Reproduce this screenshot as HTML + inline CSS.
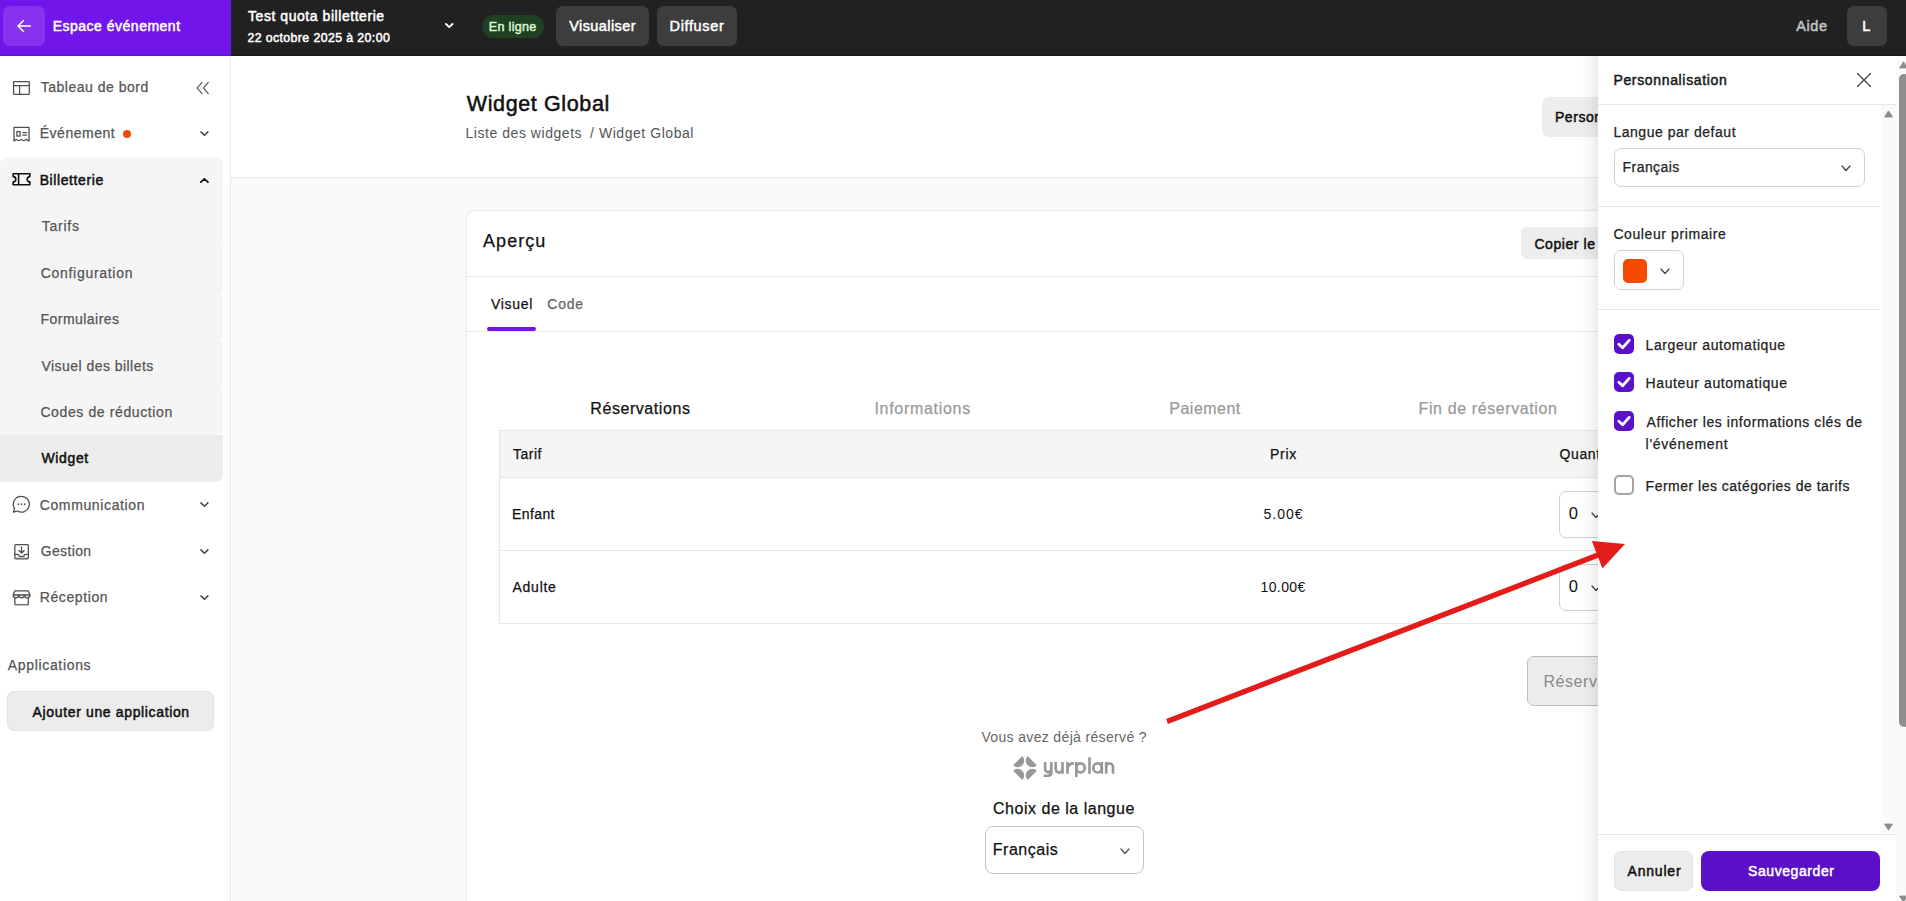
<!DOCTYPE html>
<html><head><meta charset="utf-8"><title>Widget Global</title>
<style>
*{box-sizing:border-box;margin:0;padding:0}
html,body{width:1906px;height:901px;overflow:hidden;background:#fafafa;font-family:"Liberation Sans",sans-serif}
.a{position:absolute}
.t{position:absolute;line-height:1;white-space:nowrap}
</style></head><body>
<div class="a" style="left:0px;top:0px;width:1906px;height:56px;background:#212121;border-radius:0px;"></div>
<div class="a" style="left:0px;top:54.6px;width:1906px;height:1.3999999999999986px;background:#191919;border-radius:0px;"></div>
<div class="a" style="left:0px;top:0px;width:231px;height:56px;background:#7115ea;border-radius:0px;"></div>
<div class="a" style="left:0px;top:54.6px;width:231px;height:1.3999999999999986px;background:#6410d6;border-radius:0px;"></div>
<div class="a" style="left:3px;top:6px;width:42px;height:40px;background:#8733ee;border-radius:7px;"></div>
<svg class="a" style="left:3px;top:6px" width="42" height="40" viewBox="0 0 42 40"><path d="M27.3 20H15.5M20.3 14.8L15 20L20.3 25.2" stroke="#fff" stroke-width="1.55" fill="none" stroke-linecap="round" stroke-linejoin="round"/></svg>
<div class="t" style="left:52.70px;top:18.95px;font-size:14px;letter-spacing:0.500px;color:#ffffff;-webkit-text-stroke:0.5px #ffffff;">Espace événement</div>
<div class="t" style="left:248.00px;top:8.95px;font-size:14px;letter-spacing:0.552px;color:#ffffff;-webkit-text-stroke:0.5px #ffffff;">Test quota billetterie</div>
<div class="t" style="left:247.40px;top:32.19px;font-size:12.3px;letter-spacing:0.409px;color:#ffffff;-webkit-text-stroke:0.5px #ffffff;">22 octobre 2025 à 20:00</div>
<svg class="a" style="left:444.5px;top:23.3px" width="9" height="6" viewBox="0 0 9 6"><path d="M1 1L4.25 4.1L7.5 1" stroke="#fff" stroke-width="1.9" fill="none" stroke-linecap="round" stroke-linejoin="round"/></svg>
<div class="a" style="left:482px;top:14.7px;width:62px;height:23.3px;background:#1f4023;border-radius:12px;"></div>
<div class="t" style="left:488.80px;top:20.52px;font-size:12.5px;letter-spacing:0.329px;color:#d6f3cc;-webkit-text-stroke:0.5px #d6f3cc;">En ligne</div>
<div class="a" style="left:556px;top:6px;width:93px;height:40px;background:#3d3d3d;border-radius:7px;"></div>
<div class="t" style="left:569.20px;top:18.83px;font-size:14.5px;letter-spacing:0.422px;color:#ffffff;-webkit-text-stroke:0.5px #ffffff;">Visualiser</div>
<div class="a" style="left:657px;top:6px;width:80px;height:40px;background:#3d3d3d;border-radius:7px;"></div>
<div class="t" style="left:669.50px;top:18.83px;font-size:14.5px;letter-spacing:0.657px;color:#ffffff;-webkit-text-stroke:0.5px #ffffff;">Diffuser</div>
<div class="t" style="left:1796.20px;top:18.83px;font-size:14.5px;letter-spacing:0.633px;color:#c4c4c4;-webkit-text-stroke:0.5px #c4c4c4;">Aide</div>
<div class="a" style="left:1847px;top:6px;width:40px;height:40px;background:#3d3d3d;border-radius:7px;"></div>
<div class="t" style="left:1862.30px;top:18.73px;font-size:14.5px;letter-spacing:0.575px;color:#ffffff;-webkit-text-stroke:0.5px #ffffff;">L</div>
<div class="a" style="left:0px;top:56px;width:231px;height:845px;background:#ffffff;border-radius:0px;"></div>
<div class="a" style="left:230px;top:56px;width:1px;height:845px;background:#ebebeb;border-radius:0px;"></div>
<div class="a" style="left:0;top:157px;width:223px;height:92px;background:#f5f5f5;border-radius:8px 8px 6px 0"></div>
<div class="a" style="left:0;top:249px;width:223px;height:46px;background:#f5f5f5;border-radius:0 0 6px 0"></div>
<div class="a" style="left:0;top:295px;width:223px;height:46px;background:#f5f5f5;border-radius:0 0 6px 0"></div>
<div class="a" style="left:0;top:341px;width:223px;height:47px;background:#f5f5f5;border-radius:0 0 6px 0"></div>
<div class="a" style="left:0;top:388px;width:223px;height:47px;background:#f5f5f5;border-radius:0 0 6px 0"></div>
<div class="a" style="left:0;top:435px;width:223px;height:47px;background:#ececec;border-radius:0 0 8px 0"></div>
<svg class="a" style="left:12px;top:80px" width="20" height="16" viewBox="0 0 20 16"><rect x="1.6" y="1.6" width="15.7" height="12.8" rx="0.6" stroke="#505050" stroke-width="1.3" fill="none"/><path d="M1.6 5.6H17.3M7.6 5.6V14.4" stroke="#505050" stroke-width="1.3" fill="none"/></svg>
<div class="t" style="left:40.70px;top:80.25px;font-size:14px;letter-spacing:0.507px;color:#555555;-webkit-text-stroke:0.25px #555555;">Tableau de bord</div>
<svg class="a" style="left:195px;top:81px" width="16" height="14" viewBox="0 0 16 14"><path d="M7 1.5L2.2 7L7 12.5M13.2 1.5L8.4 7L13.2 12.5" stroke="#6a6a6a" stroke-width="1.3" fill="none" stroke-linecap="round" stroke-linejoin="round"/></svg>
<svg class="a" style="left:8px;top:120px" width="28" height="30" viewBox="0 0 28 30"><path d="M6 21V7.4H21.05V21L18.4 19.4Q15.9 21.9 13.4 19.4Q10.9 21.9 8.4 19.4Z" stroke="#505050" stroke-width="1.3" fill="none" stroke-linejoin="round"/><rect x="8.9" y="11.6" width="3.2" height="4.5" stroke="#505050" stroke-width="1.25" fill="none"/><path d="M14.4 12.5H19.1M14.4 15.2H19.1" stroke="#505050" stroke-width="1.25"/></svg>
<div class="t" style="left:39.70px;top:125.95px;font-size:14px;letter-spacing:0.525px;color:#555555;-webkit-text-stroke:0.25px #555555;">Événement</div>
<div class="a" style="left:122.8px;top:129.8px;width:8.4px;height:8.4px;border-radius:50%;background:#f54a0a"></div>
<svg class="a" style="left:199.6px;top:130.6px" width="9" height="6" viewBox="0 0 9 6"><path d="M0.9 0.9L4.4 4.2L7.9 0.9" stroke="#444" stroke-width="1.5" fill="none" stroke-linecap="round" stroke-linejoin="round"/></svg>
<svg class="a" style="left:11px;top:171px" width="22" height="17" viewBox="0 0 22 17"><path d="M2.15 2.75H18.85V5.6A2.65 2.65 0 0 0 18.85 10.9V13.75H2.15V10.9A2.65 2.65 0 0 0 2.15 5.6Z" stroke="#111" stroke-width="1.6" fill="none" stroke-linejoin="round"/><path d="M7.6 2.75V13.75" stroke="#111" stroke-width="1.6"/></svg>
<div class="t" style="left:39.70px;top:172.95px;font-size:14px;letter-spacing:0.590px;color:#111111;-webkit-text-stroke:0.5px #111111;">Billetterie</div>
<svg class="a" style="left:199.6px;top:177.7px" width="9" height="6" viewBox="0 0 9 6"><path d="M0.9 4.2L4.4 0.9L7.9 4.2" stroke="#111" stroke-width="1.8" fill="none" stroke-linecap="round" stroke-linejoin="round"/></svg>
<div class="t" style="left:41.70px;top:219.05px;font-size:14px;letter-spacing:0.760px;color:#555555;-webkit-text-stroke:0.25px #555555;">Tarifs</div>
<div class="t" style="left:40.70px;top:266.05px;font-size:14px;letter-spacing:0.708px;color:#555555;-webkit-text-stroke:0.25px #555555;">Configuration</div>
<div class="t" style="left:40.50px;top:312.35px;font-size:14px;letter-spacing:0.460px;color:#555555;-webkit-text-stroke:0.25px #555555;">Formulaires</div>
<div class="t" style="left:41.50px;top:358.65px;font-size:14px;letter-spacing:0.453px;color:#555555;-webkit-text-stroke:0.25px #555555;">Visuel des billets</div>
<div class="t" style="left:40.40px;top:404.95px;font-size:14px;letter-spacing:0.612px;color:#555555;-webkit-text-stroke:0.25px #555555;">Codes de réduction</div>
<div class="t" style="left:41.40px;top:451.05px;font-size:14px;letter-spacing:0.660px;color:#111111;-webkit-text-stroke:0.5px #111111;">Widget</div>
<svg class="a" style="left:12px;top:495px" width="19" height="19" viewBox="0 0 19 19"><path d="M9.6 1.3A7.9 7.9 0 1 1 5.4 16L1.4 17.2L2.6 13.5A7.9 7.9 0 0 1 9.6 1.3Z" stroke="#505050" stroke-width="1.3" fill="none" stroke-linejoin="round"/><circle cx="6.4" cy="9.2" r="0.85" fill="#505050"/><circle cx="9.6" cy="9.2" r="0.85" fill="#505050"/><circle cx="12.8" cy="9.2" r="0.85" fill="#505050"/></svg>
<div class="t" style="left:39.70px;top:498.25px;font-size:14px;letter-spacing:0.633px;color:#555555;-webkit-text-stroke:0.25px #555555;">Communication</div>
<svg class="a" style="left:199.6px;top:501.5px" width="9" height="6" viewBox="0 0 9 6"><path d="M0.9 0.9L4.4 4.2L7.9 0.9" stroke="#444" stroke-width="1.5" fill="none" stroke-linecap="round" stroke-linejoin="round"/></svg>
<svg class="a" style="left:8px;top:538px" width="28" height="72" viewBox="0 0 28 72"><rect x="6.85" y="6.65" width="13.5" height="14.1" rx="1" stroke="#505050" stroke-width="1.3" fill="none"/><path d="M6.85 19.6H20.35V20.9H6.85Z" fill="#7a7a7a"/><path d="M6.85 16.4H9.6Q10.5 16.4 11 17.4L11.4 18.3H15.8L16.2 17.4Q16.7 16.4 17.6 16.4H20.35M13.5 8.9V15.1M10.9 12.5L13.5 15.1L16.1 12.5" stroke="#505050" stroke-width="1.3" fill="none" stroke-linecap="round" stroke-linejoin="round"/></svg>
<div class="t" style="left:40.70px;top:543.65px;font-size:14px;letter-spacing:0.367px;color:#555555;-webkit-text-stroke:0.25px #555555;">Gestion</div>
<svg class="a" style="left:199.6px;top:548.5px" width="9" height="6" viewBox="0 0 9 6"><path d="M0.9 0.9L4.4 4.2L7.9 0.9" stroke="#444" stroke-width="1.5" fill="none" stroke-linecap="round" stroke-linejoin="round"/></svg>
<svg class="a" style="left:8px;top:538px" width="28" height="72" viewBox="0 0 28 72"><path d="M6.9 52.8H20.3L22 57H5.2Z" stroke="#505050" stroke-width="1.3" fill="none" stroke-linejoin="round"/><path d="M5.2 57A2.8 2.8 0 0 0 10.8 57A2.8 2.8 0 0 0 16.4 57A2.8 2.8 0 0 0 22 57M6.9 59V66.6H20.3V59" stroke="#505050" stroke-width="1.3" fill="none" stroke-linejoin="round"/><path d="M6.9 65.9H20.3V67.3H6.9Z" fill="#7a7a7a"/></svg>
<div class="t" style="left:39.70px;top:589.85px;font-size:14px;letter-spacing:0.612px;color:#555555;-webkit-text-stroke:0.25px #555555;">Réception</div>
<svg class="a" style="left:199.6px;top:594.5px" width="9" height="6" viewBox="0 0 9 6"><path d="M0.9 0.9L4.4 4.2L7.9 0.9" stroke="#444" stroke-width="1.5" fill="none" stroke-linecap="round" stroke-linejoin="round"/></svg>
<div class="t" style="left:7.80px;top:657.75px;font-size:14px;letter-spacing:0.664px;color:#555555;-webkit-text-stroke:0.25px #555555;">Applications</div>
<div class="a" style="left:7px;top:691px;width:207px;height:40px;background:#ececec;border-radius:7px;border:1px solid #e2e2e2;"></div>
<div class="t" style="left:32.60px;top:704.65px;font-size:14px;letter-spacing:0.641px;color:#111111;-webkit-text-stroke:0.5px #111111;">Ajouter une application</div>
<div class="a" style="left:231px;top:56px;width:1675px;height:121px;background:#ffffff;border-radius:0px;"></div>
<div class="a" style="left:231px;top:177px;width:1675px;height:1px;background:#e8e8e8;border-radius:0px;"></div>
<div class="t" style="left:466.80px;top:94.20px;font-size:21.5px;letter-spacing:0.617px;color:#111111;-webkit-text-stroke:0.5px #111111;">Widget Global</div>
<div class="t" style="left:465.50px;top:125.85px;font-size:14px;letter-spacing:0.544px;color:#555555;">Liste des widgets</div>
<div class="t" style="left:590.10px;top:125.85px;font-size:14px;letter-spacing:0.543px;color:#555555;">/ Widget Global</div>
<div class="a" style="left:1542px;top:97px;width:120px;height:40px;background:#ededed;border-radius:7px;"></div>
<div class="t" style="left:1554.90px;top:110.15px;font-size:14px;letter-spacing:0.575px;color:#111111;-webkit-text-stroke:0.5px #111111;">Personnaliser</div>
<div class="a" style="left:466px;top:210px;width:1196px;height:710px;background:#ffffff;border-radius:8px;border:1px solid #e8e8e8;"></div>
<div class="t" style="left:483.00px;top:232.16px;font-size:18px;letter-spacing:1.060px;color:#111111;-webkit-text-stroke:0.25px #111111;">Aperçu</div>
<div class="a" style="left:1521px;top:227px;width:124px;height:32px;background:#ededed;border-radius:6px;"></div>
<div class="t" style="left:1534.40px;top:236.85px;font-size:14px;letter-spacing:0.575px;color:#111111;-webkit-text-stroke:0.5px #111111;">Copier le code</div>
<div class="a" style="left:467px;top:276px;width:1194px;height:1px;background:#ebebeb;border-radius:0px;"></div>
<div class="t" style="left:491.00px;top:297.15px;font-size:14px;letter-spacing:0.680px;color:#111111;-webkit-text-stroke:0.25px #111111;">Visuel</div>
<div class="t" style="left:547.20px;top:297.15px;font-size:14px;letter-spacing:0.833px;color:#666666;-webkit-text-stroke:0.25px #666666;">Code</div>
<div class="a" style="left:487px;top:327px;width:49px;height:4px;background:#7115ea;border-radius:2px;"></div>
<div class="a" style="left:467px;top:331px;width:1194px;height:1px;background:#ebebeb;border-radius:0px;"></div>
<div class="t" style="left:590.30px;top:400.76px;font-size:16px;letter-spacing:0.564px;color:#111111;-webkit-text-stroke:0.25px #111111;">Réservations</div>
<div class="t" style="left:874.40px;top:401.36px;font-size:16px;letter-spacing:0.709px;color:#9a9a9a;-webkit-text-stroke:0.25px #9a9a9a;">Informations</div>
<div class="t" style="left:1169.30px;top:400.96px;font-size:16px;letter-spacing:0.486px;color:#9a9a9a;-webkit-text-stroke:0.25px #9a9a9a;">Paiement</div>
<div class="t" style="left:1418.60px;top:400.96px;font-size:16px;letter-spacing:0.600px;color:#9a9a9a;-webkit-text-stroke:0.25px #9a9a9a;">Fin de réservation</div>
<div class="a" style="left:499px;top:430px;width:1130px;height:194px;background:#ffffff;border-radius:0px;border:1px solid #e6e6e6;"></div>
<div class="a" style="left:500px;top:431px;width:1128px;height:46px;background:#f5f5f5;border-radius:0px;"></div>
<div class="a" style="left:500px;top:477px;width:1128px;height:1px;background:#e6e6e6;border-radius:0px;"></div>
<div class="a" style="left:500px;top:550px;width:1128px;height:1px;background:#e6e6e6;border-radius:0px;"></div>
<div class="t" style="left:513.00px;top:446.85px;font-size:14px;letter-spacing:0.500px;color:#111111;-webkit-text-stroke:0.25px #111111;">Tarif</div>
<div class="t" style="left:1270.00px;top:447.05px;font-size:14px;letter-spacing:0.733px;color:#111111;-webkit-text-stroke:0.25px #111111;">Prix</div>
<div class="t" style="left:1559.60px;top:447.05px;font-size:14px;letter-spacing:0.598px;color:#111111;-webkit-text-stroke:0.25px #111111;">Quantité</div>
<div class="t" style="left:512.00px;top:507.35px;font-size:14px;letter-spacing:0.400px;color:#111111;-webkit-text-stroke:0.25px #111111;">Enfant</div>
<div class="t" style="left:1263.40px;top:506.95px;font-size:14px;letter-spacing:1.050px;color:#111111;">5.00€</div>
<div class="t" style="left:512.50px;top:580.15px;font-size:14px;letter-spacing:0.740px;color:#111111;-webkit-text-stroke:0.25px #111111;">Adulte</div>
<div class="t" style="left:1260.50px;top:579.65px;font-size:14px;letter-spacing:0.400px;color:#111111;">10.00€</div>
<div class="a" style="left:1559px;top:490.5px;width:66px;height:47.5px;background:#ffffff;border-radius:7px;border:1px solid #cfcfcf;"></div>
<div class="t" style="left:1568.80px;top:504.83px;font-size:16.5px;letter-spacing:0.577px;color:#111111;">0</div>
<svg class="a" style="left:1591px;top:512px" width="10" height="7" viewBox="0 0 10 7"><path d="M1 1L5.0 5.5L9 1" stroke="#444" stroke-width="1.3" fill="none" stroke-linecap="round" stroke-linejoin="round"/></svg>
<div class="a" style="left:1559px;top:563.5px;width:66px;height:47.0px;background:#ffffff;border-radius:7px;border:1px solid #cfcfcf;"></div>
<div class="t" style="left:1568.80px;top:577.53px;font-size:16.5px;letter-spacing:0.577px;color:#111111;">0</div>
<svg class="a" style="left:1591px;top:585px" width="10" height="7" viewBox="0 0 10 7"><path d="M1 1L5.0 5.5L9 1" stroke="#444" stroke-width="1.3" fill="none" stroke-linecap="round" stroke-linejoin="round"/></svg>
<div class="a" style="left:1527px;top:656px;width:113px;height:50px;background:#ededed;border-radius:7px;border:1px solid #bdbdbd;"></div>
<div class="t" style="left:1543.40px;top:674.06px;font-size:16px;letter-spacing:0.577px;color:#8a8a8a;">Réserver</div>
<div class="t" style="left:981.40px;top:729.85px;font-size:14px;letter-spacing:0.348px;color:#666666;">Vous avez déjà réservé ?</div>
<svg class="a" style="left:1011.4px;top:753.5px" width="28" height="28" viewBox="-14 -14 28 28"><g fill="#989898"><path d="M-2.7 -11.9L-11.9 -2.7A6.5 6.5 0 0 0 -2.7 -11.9Z"/><path d="M2.7 -11.9L11.9 -2.7A6.5 6.5 0 0 1 2.7 -11.9Z"/><path d="M-2.7 11.9L-11.9 2.7A6.5 6.5 0 0 1 -2.7 11.9Z"/><path d="M2.7 11.9L11.9 2.7A6.5 6.5 0 0 0 2.7 11.9Z"/></g></svg>
<svg class="a" style="left:0;top:0" width="1906" height="901" viewBox="0 0 1906 901"><g stroke="#989898" stroke-width="2.65" fill="none" stroke-linecap="butt"><path d="M1045.1 762V769.1A3.1 3.1 0 0 0 1051.3 769.1M1051.3 762V772.6Q1051.3 775.7 1048 775.7H1043.6"/><path d="M1055.7 762V769.1A3.4 3.4 0 0 0 1062.5 769.1M1062.5 762V773.8"/><path d="M1067.5 762V773.8M1067.5 769.2Q1067.5 763.3 1073.9 763.3"/><path d="M1076.3 762V777"/><ellipse cx="1080.55" cy="767.9" rx="4.25" ry="4.6"/><path d="M1089.5 757.3V773.8"/><ellipse cx="1097.55" cy="767.9" rx="4.25" ry="4.6"/><path d="M1101.8 762V773.8"/><path d="M1106.2 762V773.8M1106.2 766.9A3.4 3.4 0 0 1 1113 766.9V773.8"/></g></svg>
<div class="t" style="left:993.00px;top:801.46px;font-size:16px;letter-spacing:0.518px;color:#111111;-webkit-text-stroke:0.25px #111111;">Choix de la langue</div>
<div class="a" style="left:984.5px;top:826px;width:159.5px;height:47.5px;background:#ffffff;border-radius:8px;border:1px solid #c4c4c4;"></div>
<div class="t" style="left:992.80px;top:841.66px;font-size:16px;letter-spacing:0.514px;color:#111111;-webkit-text-stroke:0.25px #111111;">Français</div>
<svg class="a" style="left:1120px;top:847.5px" width="10" height="7" viewBox="0 0 10 7"><path d="M1 1L5.0 5.5L9 1" stroke="#555" stroke-width="1.3" fill="none" stroke-linecap="round" stroke-linejoin="round"/></svg>
<div class="a" style="left:1581px;top:56px;width:17px;height:845px;background:linear-gradient(to right,rgba(0,0,0,0),rgba(0,0,0,0.035) 60%,rgba(0,0,0,0.075))"></div>
<div class="a" style="left:1598px;top:56px;width:308px;height:845px;background:#ffffff;border-radius:0px;"></div>
<div class="t" style="left:1613.40px;top:72.95px;font-size:14px;letter-spacing:0.660px;color:#1a1a1a;-webkit-text-stroke:0.5px #1a1a1a;">Personnalisation</div>
<svg class="a" style="left:1856px;top:72px" width="16" height="16" viewBox="0 0 16 16"><path d="M1.5 1.5L14.5 14.5M14.5 1.5L1.5 14.5" stroke="#444" stroke-width="1.3" stroke-linecap="round"/></svg>
<div class="a" style="left:1598px;top:104px;width:298px;height:1px;background:#e8e8e8;border-radius:0px;"></div>
<div class="a" style="left:1881px;top:105px;width:15px;height:728px;background:#fafafa;border-radius:0px;"></div>
<svg class="a" style="left:1884px;top:110px" width="9" height="8" viewBox="0 0 9 8"><path d="M4.5 0.8L8.5 7H0.5Z" fill="#8c8c8c" stroke="#8c8c8c" stroke-width="0.8" stroke-linejoin="round"/></svg>
<svg class="a" style="left:1884px;top:823px" width="9" height="8" viewBox="0 0 9 8"><path d="M4.5 7.2L8.5 1H0.5Z" fill="#8c8c8c" stroke="#8c8c8c" stroke-width="0.8" stroke-linejoin="round"/></svg>
<div class="t" style="left:1613.40px;top:125.35px;font-size:14px;letter-spacing:0.531px;color:#222222;-webkit-text-stroke:0.25px #222222;">Langue par defaut</div>
<div class="a" style="left:1614px;top:147.5px;width:251px;height:39.0px;background:#ffffff;border-radius:7px;border:1px solid #d2d2d2;"></div>
<div class="t" style="left:1622.60px;top:159.95px;font-size:14px;letter-spacing:0.429px;color:#222222;-webkit-text-stroke:0.25px #222222;">Français</div>
<svg class="a" style="left:1841px;top:164.5px" width="10" height="7" viewBox="0 0 10 7"><path d="M1 1L5.0 5.5L9 1" stroke="#444" stroke-width="1.3" fill="none" stroke-linecap="round" stroke-linejoin="round"/></svg>
<div class="a" style="left:1598px;top:206px;width:282px;height:1px;background:#e8e8e8;border-radius:0px;"></div>
<div class="t" style="left:1613.40px;top:227.05px;font-size:14px;letter-spacing:0.593px;color:#222222;-webkit-text-stroke:0.25px #222222;">Couleur primaire</div>
<div class="a" style="left:1614px;top:250px;width:70px;height:40px;background:#ffffff;border-radius:7px;border:1px solid #d2d2d2;"></div>
<div class="a" style="left:1623px;top:259px;width:24px;height:24px;background:#f74a00;border-radius:5px;"></div>
<svg class="a" style="left:1660px;top:267.5px" width="10" height="7" viewBox="0 0 10 7"><path d="M1 1L5.0 5.5L9 1" stroke="#444" stroke-width="1.3" fill="none" stroke-linecap="round" stroke-linejoin="round"/></svg>
<div class="a" style="left:1598px;top:309px;width:282px;height:1px;background:#e8e8e8;border-radius:0px;"></div>
<div class="a" style="left:1614px;top:334px;width:20px;height:20px;background:#5b10c8;border-radius:5px;"></div><svg class="a" style="left:1614px;top:334px" width="20" height="20" viewBox="0 0 20 20"><path d="M4.8 10.2L8.6 13.8L15.2 6.4" stroke="#fff" stroke-width="2.8" fill="none" stroke-linecap="round" stroke-linejoin="round"/></svg>
<div class="t" style="left:1645.60px;top:337.95px;font-size:14px;letter-spacing:0.572px;color:#222222;-webkit-text-stroke:0.25px #222222;">Largeur automatique</div>
<div class="a" style="left:1614px;top:372px;width:20px;height:20px;background:#5b10c8;border-radius:5px;"></div><svg class="a" style="left:1614px;top:372px" width="20" height="20" viewBox="0 0 20 20"><path d="M4.8 10.2L8.6 13.8L15.2 6.4" stroke="#fff" stroke-width="2.8" fill="none" stroke-linecap="round" stroke-linejoin="round"/></svg>
<div class="t" style="left:1645.60px;top:375.65px;font-size:14px;letter-spacing:0.589px;color:#222222;-webkit-text-stroke:0.25px #222222;">Hauteur automatique</div>
<div class="a" style="left:1614px;top:411px;width:20px;height:20px;background:#5b10c8;border-radius:5px;"></div><svg class="a" style="left:1614px;top:411px" width="20" height="20" viewBox="0 0 20 20"><path d="M4.8 10.2L8.6 13.8L15.2 6.4" stroke="#fff" stroke-width="2.8" fill="none" stroke-linecap="round" stroke-linejoin="round"/></svg>
<div class="t" style="left:1646.60px;top:414.75px;font-size:14px;letter-spacing:0.566px;color:#222222;-webkit-text-stroke:0.25px #222222;">Afficher les informations clés de</div>
<div class="t" style="left:1645.60px;top:437.05px;font-size:14px;letter-spacing:0.710px;color:#222222;-webkit-text-stroke:0.25px #222222;">l'événement</div>
<div class="a" style="left:1614px;top:475px;width:20px;height:20px;background:#fff;border-radius:5px;border:1px solid #a3a3a3;border-width:2px;"></div>
<div class="t" style="left:1645.60px;top:478.95px;font-size:14px;letter-spacing:0.493px;color:#222222;-webkit-text-stroke:0.25px #222222;">Fermer les catégories de tarifs</div>
<div class="a" style="left:1598px;top:834px;width:298px;height:1px;background:#e8e8e8;border-radius:0px;"></div>
<div class="a" style="left:1614px;top:851px;width:79px;height:40px;background:#ececec;border-radius:7px;border:1px solid #e2e2e2;"></div>
<div class="t" style="left:1627.50px;top:864.15px;font-size:14px;letter-spacing:0.800px;color:#111111;-webkit-text-stroke:0.5px #111111;">Annuler</div>
<div class="a" style="left:1701px;top:851px;width:179px;height:40px;background:#5b10c8;border-radius:8px;"></div>
<div class="t" style="left:1748.00px;top:864.15px;font-size:14px;letter-spacing:0.580px;color:#ffffff;-webkit-text-stroke:0.5px #ffffff;">Sauvegarder</div>
<div class="a" style="left:1896px;top:56px;width:10px;height:845px;background:#fafafa;border-radius:0px;"></div>
<svg class="a" style="left:1899px;top:60.5px" width="9" height="8" viewBox="0 0 9 8"><path d="M4.5 0.8L8.5 7H0.5Z" fill="#8c8c8c" stroke="#8c8c8c" stroke-width="0.8" stroke-linejoin="round"/></svg>
<div class="a" style="left:1899px;top:74px;width:11px;height:653px;background:#8f8f8f;border-radius:5px;"></div>
<svg class="a" style="left:1899px;top:895px" width="9" height="8" viewBox="0 0 9 8"><path d="M4.5 7.2L8.5 1H0.5Z" fill="#8c8c8c" stroke="#8c8c8c" stroke-width="0.8" stroke-linejoin="round"/></svg>
<svg class="a" style="left:0;top:0" width="1906" height="901" viewBox="0 0 1906 901"><path d="M1167 721.5L1598 555" stroke="#e31b1b" stroke-width="5.3" fill="none"/><path d="M1591.9 541.1L1625 544.1L1602.4 568.6Z" fill="#e31b1b"/></svg>
</body></html>
